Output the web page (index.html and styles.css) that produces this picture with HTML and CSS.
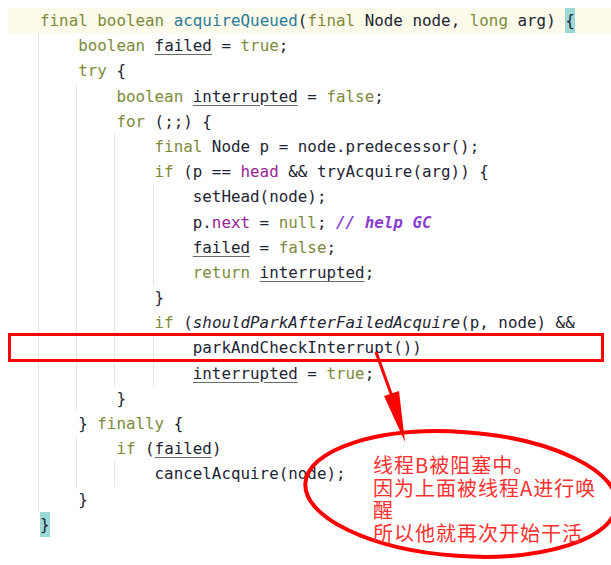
FILE: index.html
```html
<!DOCTYPE html>
<html>
<head>
<meta charset="utf-8">
<link rel="stylesheet" href="styles.css">
</head>
<body>
<div class="editor">
  <div class="line current"><span class="code"><span class="k">final boolean</span> <span class="fn">acquireQueued</span>(<span class="k">final</span> Node node, <span class="k">long</span> arg) <span class="br">{</span></span></div>
  <div class="line"><span class="g"></span><span class="code"><span class="k">boolean</span> <span class="u">failed</span> = <span class="k">true</span>;</span></div>
  <div class="line"><span class="g"></span><span class="code"><span class="k">try</span> {</span></div>
  <div class="line"><span class="g"></span><span class="g"></span><span class="code"><span class="k">boolean</span> <span class="u">interrupted</span> = <span class="k">false</span>;</span></div>
  <div class="line"><span class="g"></span><span class="g"></span><span class="code"><span class="k">for</span> (;;) {</span></div>
  <div class="line"><span class="g"></span><span class="g"></span><span class="g"></span><span class="code"><span class="k">final</span> Node p = node.predecessor();</span></div>
  <div class="line"><span class="g"></span><span class="g"></span><span class="g"></span><span class="code"><span class="k">if</span> (p == <span class="f">head</span> &amp;&amp; tryAcquire(arg)) {</span></div>
  <div class="line"><span class="g"></span><span class="g"></span><span class="g"></span><span class="g"></span><span class="code">setHead(node);</span></div>
  <div class="line"><span class="g"></span><span class="g"></span><span class="g"></span><span class="g"></span><span class="code">p.<span class="f">next</span> = <span class="k">null</span>; <span class="c">// help GC</span></span></div>
  <div class="line"><span class="g"></span><span class="g"></span><span class="g"></span><span class="g"></span><span class="code"><span class="u">failed</span> = <span class="k">false</span>;</span></div>
  <div class="line"><span class="g"></span><span class="g"></span><span class="g"></span><span class="g"></span><span class="code"><span class="k">return</span> <span class="u">interrupted</span>;</span></div>
  <div class="line"><span class="g"></span><span class="g"></span><span class="g"></span><span class="code">}</span></div>
  <div class="line"><span class="g"></span><span class="g"></span><span class="g"></span><span class="code"><span class="k">if</span> (<span class="it">shouldParkAfterFailedAcquire</span>(p, node) &amp;&amp;</span></div>
  <div class="line"><span class="g"></span><span class="g"></span><span class="g"></span><span class="g"></span><span class="code">parkAndCheckInterrupt())</span></div>
  <div class="line"><span class="g"></span><span class="g"></span><span class="g"></span><span class="g"></span><span class="code"><span class="u">interrupted</span> = <span class="k">true</span>;</span></div>
  <div class="line"><span class="g"></span><span class="g"></span><span class="code">}</span></div>
  <div class="line"><span class="g"></span><span class="code">} <span class="k">finally</span> {</span></div>
  <div class="line"><span class="g"></span><span class="g"></span><span class="code"><span class="k">if</span> (<span class="u">failed</span>)</span></div>
  <div class="line"><span class="g"></span><span class="g"></span><span class="g"></span><span class="code">cancelAcquire(node);</span></div>
  <div class="line"><span class="g"></span><span class="code">}</span></div>
  <div class="line"><span class="code"><span class="br">}</span></span></div>
</div>

<svg class="marks" width="611" height="565" viewBox="0 0 611 565">
  <rect x="9.5" y="334.5" width="593" height="26" fill="none" stroke="#ff0000" stroke-width="3"/>
  <line x1="376" y1="352" x2="394" y2="402" stroke="#ff0000" stroke-width="3"/>
  <polygon points="384,396 399,391 405,442" fill="#ff0000"/>
  <ellipse cx="461" cy="494" rx="156" ry="62" fill="none" stroke="#ff0000" stroke-width="4" transform="rotate(4 461 494)"/>
</svg>

<div class="note">
  <div>线程B被阻塞中。</div>
  <div>因为上面被线程A进行唤醒</div>
  <div>所以他就再次开始干活</div>
</div>
</body>
</html>
```

FILE: styles.css
```css
html, body {
  margin: 0;
  padding: 0;
  background: #ffffff;
}

.editor {
  padding: 8px 0 0 8px;
  font-family: "DejaVu Sans Mono", "Liberation Mono", monospace;
  font-size: 15.86px;
  color: #1d2433;
}

.line {
  display: flex;
  height: 25.2px;
  padding-left: 32px;
  white-space: pre;
}

.line.current {
  background: #fcfaea;
}

.g {
  flex: 0 0 auto;
  box-sizing: border-box;
  width: 4ch;
  margin-left: -2px;
  margin-right: 2px;
  border-left: 1px solid #e6e6e6;
}

.code {
  line-height: 25.2px;
}

.k { color: #7d8a3a; }
.fn { color: #2b7b9b; }
.f { color: #9a2494; }
.c { color: #8a3cd4; font-style: italic; font-weight: bold; }
.it { font-style: italic; }
.u {
  text-decoration: underline;
  text-decoration-color: #6b6b6b;
  text-underline-offset: 3px;
}

.br {
  display: inline-block;
  height: 25.2px;
  line-height: 25.2px;
  background: #9dd8d8;
  vertical-align: top;
}

.marks {
  position: absolute;
  left: 0;
  top: 0;
}

.note {
  position: absolute;
  left: 373px;
  top: 454px;
  width: 232px;
  font-family: "Noto Sans CJK SC", sans-serif;
  font-size: 20px;
  letter-spacing: 1px;
  line-height: 22.5px;
  color: #ff3030;
}
```
